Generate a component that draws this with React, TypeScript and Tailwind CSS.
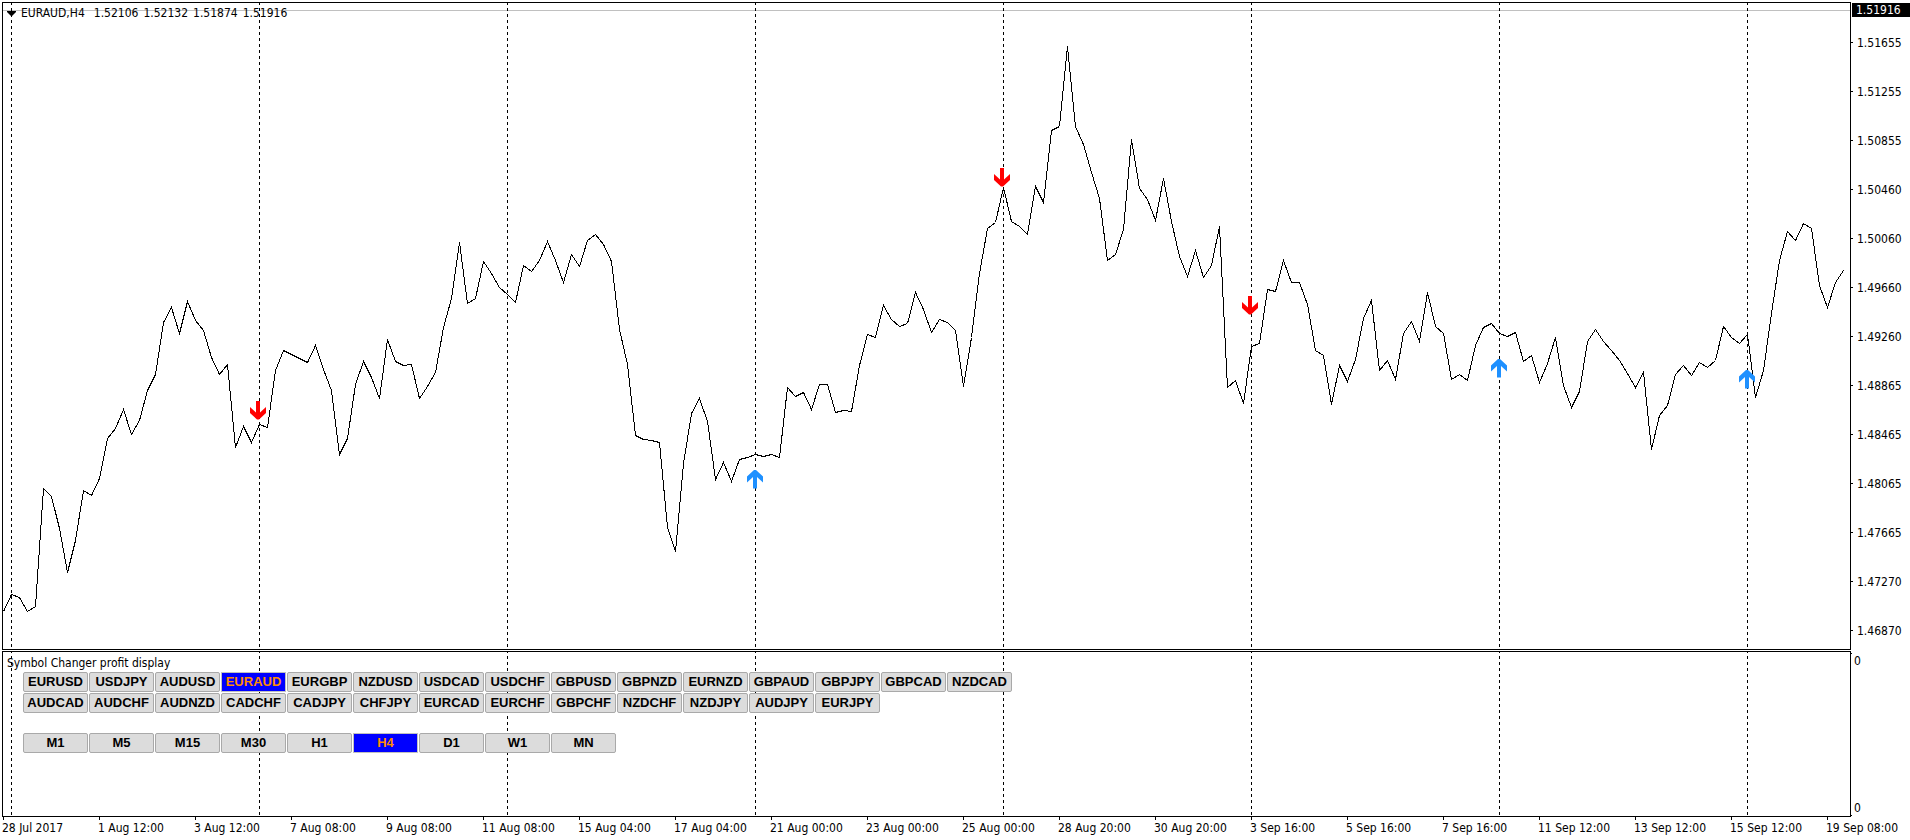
import { useState } from 'react';

const SYMBOLS = [
  ['EURUSD', 'USDJPY', 'AUDUSD', 'EURAUD', 'EURGBP', 'NZDUSD', 'USDCAD', 'USDCHF', 'GBPUSD', 'GBPNZD', 'EURNZD', 'GBPAUD', 'GBPJPY', 'GBPCAD', 'NZDCAD'],
  ['AUDCAD', 'AUDCHF', 'AUDNZD', 'CADCHF', 'CADJPY', 'CHFJPY', 'EURCAD', 'EURCHF', 'GBPCHF', 'NZDCHF', 'NZDJPY', 'AUDJPY', 'EURJPY'],
];

const TIMEFRAMES = ['M1', 'M5', 'M15', 'M30', 'H1', 'H4', 'D1', 'W1', 'MN'];

const OHLC = ['1.52106', '1.52132', '1.51874', '1.51916'];

const PRICES = [
  '1.51655', '1.51255', '1.50855', '1.50460', '1.50060', '1.49660', '1.49260',
  '1.48865', '1.48465', '1.48065', '1.47665', '1.47270', '1.46870',
];

const DATES = [
  '28 Jul 2017', '1 Aug 12:00', '3 Aug 12:00', '7 Aug 08:00', '9 Aug 08:00', '11 Aug 08:00', '15 Aug 04:00',
  '17 Aug 04:00', '21 Aug 00:00', '23 Aug 00:00', '25 Aug 00:00', '28 Aug 20:00', '30 Aug 20:00', '3 Sep 16:00',
  '5 Sep 16:00', '7 Sep 16:00', '11 Sep 12:00', '13 Sep 12:00', '15 Sep 12:00', '19 Sep 08:00',
];

// Height of each close on the price scale, one per bar
const CLOSES = [
  611, 594, 597, 611, 606, 488, 496, 528, 572, 540, 490, 495, 478, 438, 428, 409, 434, 420, 390, 374,
  322, 307, 333, 301, 320, 330, 357, 374, 364, 447, 426, 442, 424, 427, 370, 350, 354, 358, 362, 345,
  369, 390, 454, 438, 384, 361, 377, 398, 339, 361, 365, 364, 398, 386, 372, 327, 298, 242, 303, 298,
  261, 273, 287, 294, 302, 265, 271, 260, 241, 260, 282, 254, 266, 240, 234, 244, 261, 329, 364, 435,
  439, 440, 442, 527, 551, 463, 413, 398, 421, 479, 462, 481, 459, 457, 454, 456, 454, 457, 387, 396,
  392, 409, 384, 384, 412, 410, 411, 365, 334, 337, 305, 319, 326, 323, 292, 309, 332, 319, 322, 330,
  386, 337, 273, 228, 222, 187, 221, 226, 234, 186, 202, 130, 126, 46, 126, 144, 172, 198, 260, 254,
  229, 139, 188, 199, 220, 178, 221, 256, 276, 250, 277, 265, 226, 387, 380, 403, 346, 343, 289, 291,
  260, 282, 282, 304, 350, 355, 404, 365, 381, 359, 318, 300, 370, 360, 379, 333, 321, 341, 292, 326,
  333, 379, 374, 380, 345, 327, 323, 333, 336, 332, 361, 355, 382, 363, 337, 385, 407, 391, 341, 329,
  341, 350, 360, 373, 387, 372, 449, 415, 405, 374, 365, 375, 362, 367, 360, 326, 337, 343, 334, 397,
  370, 313, 260, 231, 240, 223, 228, 285, 307, 282, 270,
];

const BAR = 8;
const PERIODS = [1, 32, 63, 94, 125, 156, 187, 218];

const SIGNALS = [
  { type: 'sell', x: 250, y: 401 },
  { type: 'buy', x: 747, y: 470 },
  { type: 'sell', x: 994, y: 168 },
  { type: 'sell', x: 1242, y: 296 },
  { type: 'buy', x: 1491, y: 359 },
  { type: 'buy', x: 1739, y: 370 },
];

function Separators({ dashOffset }: { dashOffset: number }) {
  return (
    <g stroke="black" strokeDasharray="3 3" strokeDashoffset={dashOffset} shapeRendering="crispEdges">
      {PERIODS.map((bar) => (
        <line key={bar} x1={bar * BAR + 0.5} x2={bar * BAR + 0.5} y1="0" y2="100%" />
      ))}
    </g>
  );
}

function PriceChart() {
  const points = CLOSES.map((y, i) => `${i * BAR + 3.5},${y + 0.5}`).join(' ');

  return (
    <svg className="absolute inset-0 h-full w-full" aria-label="EURAUD price line">
      <line x1="0" x2="100%" y1="7.5" y2="7.5" stroke="#c0c0c0" shapeRendering="crispEdges" />
      <Separators dashOffset={1} />
      <g transform="translate(-3 -3)">
        <polyline points={points} fill="none" stroke="black" shapeRendering="crispEdges" />
        {SIGNALS.map(({ type, x, y }) => (
          <path
            key={x}
            transform={`translate(${x} ${y})`}
            fill={type === 'sell' ? '#ff0000' : '#1e90ff'}
            d={
              type === 'sell'
                ? 'M6 0h4v11.500l6-5.500v6L9 18.500H7L0 12V6l6 5.500z'
                : 'M6 18.500h4V7l6 5.500v-6L9 0H7L0 6.500v6L6 7z'
            }
          />
        ))}
      </g>
    </svg>
  );
}

type ChartButtonProps = {
  label: string;
  active: boolean;
  onClick: () => void;
};

function ChartButton({ label, active, onClick }: ChartButtonProps) {
  const colors = active ? 'border-[#c0c0c0] bg-[#0000ff] text-[#ff8c00]' : 'rounded-[2px] border-[#a9a9a9] bg-[#dcdcdc] text-black';
  return (
    <button
      type="button"
      aria-pressed={active}
      onClick={onClick}
      className={`h-5 w-[65px] border text-center font-[Liberation_Sans,Arial,sans-serif] text-[13px] leading-[18px] font-bold ${colors}`}
    >
      {label}
    </button>
  );
}

function App() {
  const [symbol, setSymbol] = useState('EURAUD');
  const [timeframe, setTimeframe] = useState('H4');

  return (
    <div className="flex min-h-screen flex-col overflow-hidden bg-white pt-[2px] pl-[2px] font-[DejaVu_Sans_Condensed,Tahoma,sans-serif] text-xs text-black">
      <main className="flex grow flex-col gap-px">
        <section className="flex min-h-[648px] grow">
          <div className="relative grow border border-black">
            <PriceChart />
            <div className="relative flex items-center gap-[5px] pt-[2px] pl-1 leading-4">
              <svg width="9" height="5" aria-hidden="true">
                <path d="M0 0h9v1L5 5H4L0 1z" fill="black" />
              </svg>
              <h1 className="pr-1">{`${symbol},${timeframe}`}</h1>
              {OHLC.map((value) => (
                <span key={value}>{value}</span>
              ))}
            </div>
          </div>
          <div className="-mb-2 w-[59px] shrink-0">
            <div className="mt-px mb-px ml-px bg-black pl-1 leading-[14px] text-white">1.51916</div>
            {PRICES.map((price) => (
              <div key={price} className="flex h-[49px] items-center gap-1">
                <span className="h-px w-[2px] bg-black" />
                {price}
              </div>
            ))}
          </div>
        </section>

        <section className="flex h-[166px]">
          <div className="relative grow border border-black">
            <svg className="absolute inset-0 h-full w-full" aria-hidden="true">
              <Separators dashOffset={2} />
            </svg>
            <div className="relative">
              <h2 className="pt-[3px] pb-px pl-1 leading-4">Symbol Changer profit display</h2>
              <div className="flex flex-col gap-px pl-5">
                {SYMBOLS.map((row) => (
                  <div key={row[0]} className="flex gap-px">
                    {row.map((name) => (
                      <ChartButton key={name} label={name} active={name === symbol} onClick={() => setSymbol(name)} />
                    ))}
                  </div>
                ))}
              </div>
              <div className="mt-5 flex gap-px pl-5">
                {TIMEFRAMES.map((name) => (
                  <ChartButton key={name} label={name} active={name === timeframe} onClick={() => setTimeframe(name)} />
                ))}
              </div>
            </div>
          </div>
          <div className="flex w-[59px] shrink-0 flex-col pt-[2px] pb-px leading-[14px]">
            <span className="h-px w-px bg-black" />
            <span className="grow pl-[3px]">0</span>
            <span className="pl-[3px]">0</span>
            <span className="h-px w-px bg-black" />
          </div>
        </section>
      </main>

      <footer className="flex h-[23px] overflow-hidden pl-px">
        {DATES.map((date) => (
          <div key={date} className="w-24 shrink-0 whitespace-nowrap">
            <div className="h-[3px] w-px bg-black" />
            <div className="-ml-px leading-4">{date}</div>
          </div>
        ))}
      </footer>
    </div>
  );
}

export default App;
